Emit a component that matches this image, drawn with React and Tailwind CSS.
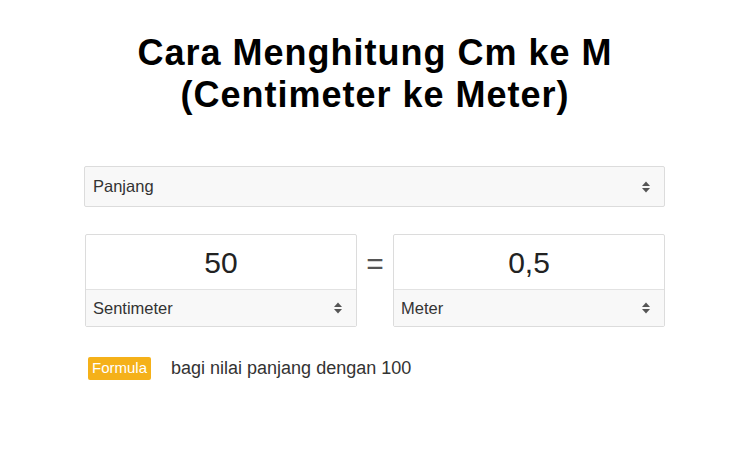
import { useState } from "react";

const Arrows = () => (
  <svg width="10" height="14" viewBox="0 0 10 14" className="shrink-0">
    <path d="M5 1.5 L9 6 H1 Z" fill="#555" />
    <path d="M5 12.5 L9 8 H1 Z" fill="#555" />
  </svg>
);

const UnitBox = ({ value, unit }) => (
  <div className="w-[272px] border border-[#dcdcdc] rounded-[2px] bg-white">
    <div className="h-[54px] flex items-center justify-center text-[30px] text-[#222]">
      {value}
    </div>
    <div className="h-[37px] border-t border-[#e2e2e2] bg-[#f8f8f8] flex items-center justify-between pl-[7px] pr-[13px] text-[16.5px] text-[#333]">
      <span>{unit}</span>
      <Arrows />
    </div>
  </div>
);

const App = () => {
  const [from] = useState({ value: "50", unit: "Sentimeter" });
  const [to] = useState({ value: "0,5", unit: "Meter" });

  return (
    <div className="w-[750px] h-[450px] bg-white overflow-hidden font-['Liberation_Sans',Arial,sans-serif]">
      <h1 className="pt-[32px] text-center text-[36px] leading-[42px] font-bold text-black font-['Liberation_Sans',Arial,sans-serif] tracking-[1px]">
        Cara Menghitung Cm ke M
        <br />
        (Centimeter ke Meter)
      </h1>

      <div className="ml-[84px] w-[581px] mt-[50px]">
        {/* Quantity select */}
        <div className="h-[41px] border border-[#dcdcdc] rounded-[2px] bg-[#f8f8f8] flex items-center justify-between pl-[8px] pr-[13px] text-[16.5px] text-[#333]">
          <span>Panjang</span>
          <Arrows />
        </div>

        {/* Converter */}
        <div className="flex items-start mt-[27px] pl-[1px]">
          <UnitBox value={from.value} unit={from.unit} />
          <div className="w-[36px] text-center text-[30px] text-[#555] leading-none mt-[15px]">
            =
          </div>
          <UnitBox value={to.value} unit={to.unit} />
        </div>

        {/* Formula */}
        <div className="flex items-center mt-[28px] ml-[4px]">
          <span className="bg-[#f5b119] text-white text-[15px] px-[4px] h-[23px] flex items-center rounded-[2px]">
            Formula
          </span>
          <span className="ml-[20px] text-[18px] text-[#333]">
            bagi nilai panjang dengan 100
          </span>
        </div>
      </div>
    </div>
  );
};

export default App;
